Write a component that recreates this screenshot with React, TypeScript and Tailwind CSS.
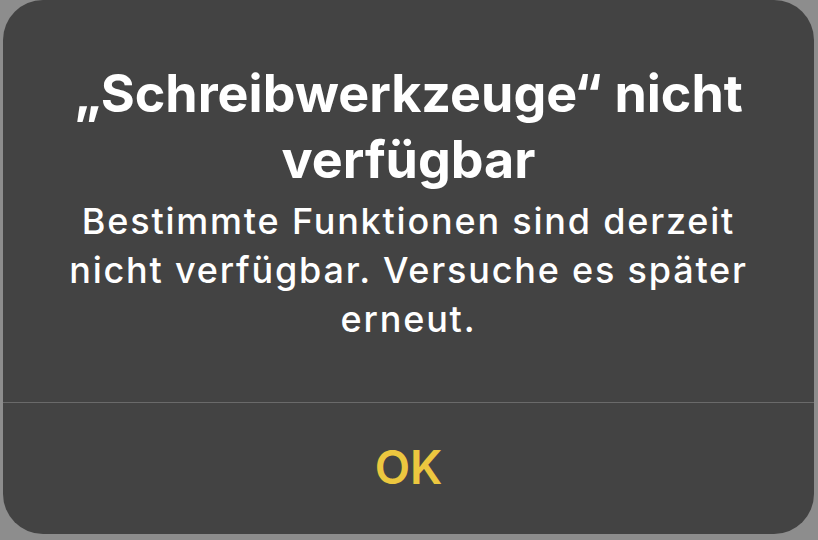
export default function App() {
  return (
    <main className="w-[818px] h-[540px] bg-[#8d8d8d] pl-[3px] pr-[4px] overflow-hidden">
      <div
        className="h-[534px] rounded-[40px] bg-[#434343] flex flex-col text-center"
        style={{ fontFamily: "Inter, 'Noto Sans', sans-serif" }}
      >
        <div className="flex-1 flex flex-col px-4 pt-[61px]">
          <h1 className="text-white font-bold text-[52px] leading-[66px] whitespace-nowrap">
            „Schreibwerkzeuge“ nicht
            <br />
            verfügbar
          </h1>
          <p className="mt-[4px] text-white font-medium text-[36px] leading-[49px] tracking-[1.8px] whitespace-nowrap">
            Bestimmte Funktionen sind derzeit
            <br />
            nicht verfügbar. Versuche es später
            <br />
            erneut.
          </p>
        </div>
        <div className="h-px bg-[#6a6a6a]" />
        <button className="h-[131px] text-[#ecc73f] font-semibold text-[46px] pb-[3px]">
          OK
        </button>
      </div>
    </main>
  );
}
